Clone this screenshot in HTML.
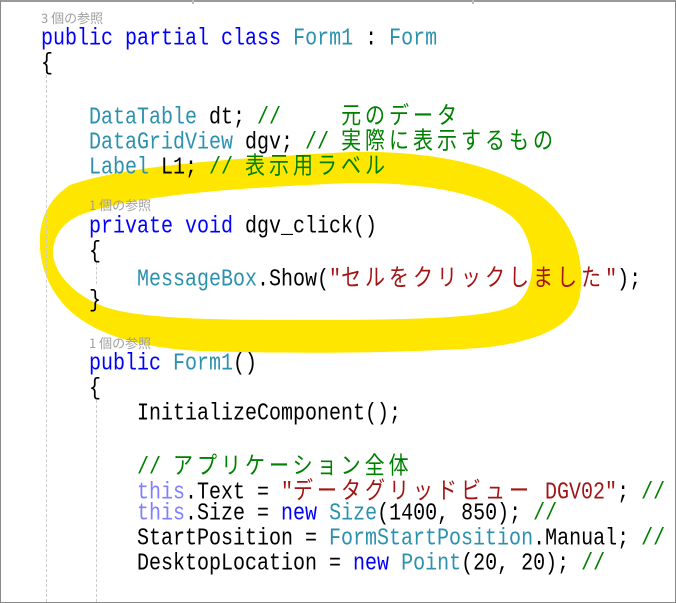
<!DOCTYPE html>
<html><head><meta charset="utf-8"><style>
html,body{margin:0;padding:0;background:#fff;}
body{width:676px;height:602px;position:relative;overflow:hidden;font-family:"Liberation Mono","Noto Sans CJK JP",monospace;}
.frame{position:absolute;left:0;top:0;width:674px;height:600px;border:1px solid #888;border-top:2px solid #999;}
.ln{position:absolute;height:25px;line-height:25px;font-size:20px;white-space:pre;color:#000;z-index:2;margin-top:2px;}
.ln>span.s{display:inline-block;transform:scaleY(1.18);transform-origin:0 60%;}
.j{font-family:"Noto Sans CJK JP",sans-serif;font-size:20px;letter-spacing:4px;}
.k{color:#0000ff}.t{color:#2b91af}.c{color:#008000}.r{color:#a31515}.th{color:#8080ff}
.h{position:absolute;font-family:"Noto Sans CJK JP","Liberation Sans",sans-serif;font-size:13px;color:#a0a0a0;z-index:2;line-height:15px;}
.g{position:absolute;width:0;border-left:1px dashed #ccc;z-index:1;}
svg{position:absolute;left:0;top:0;z-index:1;}
</style></head><body>
<div class="frame"></div>
<div style="position:absolute;left:192px;top:0;width:2px;height:4px;background:#bbb"></div>
<div style="position:absolute;left:472px;top:0;width:2px;height:4px;background:#bbb"></div>
<svg width="676" height="602"><path fill="#ffe600" fill-rule="evenodd" d="
M70,185 C120,168 200,160 350,152 C430,150 500,165 540,195 C575,222 585,260 580,295 C575,325 540,342 480,348 C400,353 300,354 200,351 C140,348 100,335 75,315 C50,295 38,265 40,235 C42,210 55,195 70,185 Z
M80,215 C130,196 230,188 350,183 C430,182 500,195 522,228 C538,255 535,290 515,305 C490,318 420,320 300,320 C200,320 130,318 100,305 C70,292 52,270 53,250 C55,232 65,222 80,215 Z"/></svg>
<div class="g" style="left:46px;top:70px;height:532px"></div>
<div class="g" style="left:96px;top:262px;height:22px"></div>
<div class="g" style="left:96px;top:400px;height:202px"></div>

<div class="h" style="left:41px;top:10px">3 個の参照</div>
<div class="ln" style="left:41px;top:25px"><span class="s"><span class="k">public partial class</span> <span class="t">Form1</span> : <span class="t">Form</span></span></div>
<div class="ln" style="left:41px;top:50px"><span class="s">{</span></div>
<div class="ln" style="left:89px;top:100px"><span class="s"><span class="t">DataTable</span> dt; <span class="c">//     <span class="j">元のデータ</span></span></span></div>
<div class="ln" style="left:89px;top:125px"><span class="s"><span class="t">DataGridView</span> dgv; <span class="c">// <span class="j">実際に表示するもの</span></span></span></div>
<div class="ln" style="left:89px;top:150px"><span class="s"><span class="t">Label</span> L1; <span class="c">// <span class="j">表示用ラベル</span></span></span></div>
<div class="h" style="left:89px;top:197px">1 個の参照</div>
<div class="ln" style="left:89px;top:213px"><span class="s"><span class="k">private void</span> dgv_click()</span></div>
<div class="ln" style="left:89px;top:238px"><span class="s">{</span></div>
<div class="ln" style="left:137px;top:262px"><span class="s"><span class="t">MessageBox</span>.Show(<span class="r">"<span class="j">セルをクリックしました</span>"</span>);</span></div>
<div class="ln" style="left:89px;top:287px"><span class="s">}</span></div>
<div class="h" style="left:89px;top:335px">1 個の参照</div>
<div class="ln" style="left:89px;top:350px"><span class="s"><span class="k">public</span> <span class="t">Form1</span>()</span></div>
<div class="ln" style="left:89px;top:375px"><span class="s">{</span></div>
<div class="ln" style="left:137px;top:400px"><span class="s">InitializeComponent();</span></div>
<div class="ln" style="left:137px;top:450px"><span class="s"><span class="c">// <span class="j">アプリケーション全体</span></span></span></div>
<div class="ln" style="left:137px;top:475px"><span class="s"><span class="th">this</span>.Text = <span class="r">"<span class="j">データグリッドビュー</span> DGV02"</span>; <span class="c">//</span></span></div>
<div class="ln" style="left:137px;top:500px"><span class="s"><span class="th">this</span>.Size = <span class="k">new</span> <span class="t">Size</span>(1400, 850); <span class="c">//</span></span></div>
<div class="ln" style="left:137px;top:525px"><span class="s">StartPosition = <span class="t">FormStartPosition</span>.Manual; <span class="c">//</span></span></div>
<div class="ln" style="left:137px;top:550px"><span class="s">DesktopLocation = <span class="k">new</span> <span class="t">Point</span>(20, 20); <span class="c">//</span></span></div>
</body></html>
